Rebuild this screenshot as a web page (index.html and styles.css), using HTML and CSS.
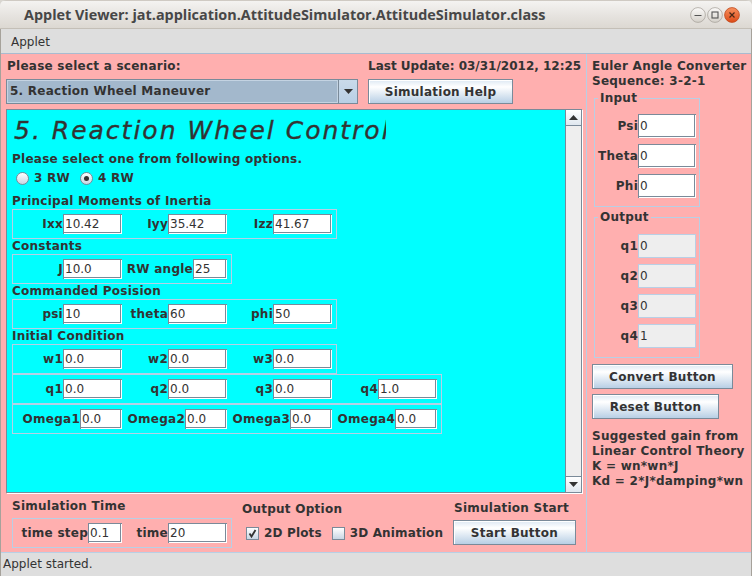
FILE: index.html
```html
<!DOCTYPE html>
<html>
<head>
<meta charset="utf-8">
<link rel="stylesheet" href="styles.css">
</head>
<body>
<div class="win">
  <div class="titlebar">
    <div class="title">Applet Viewer: jat.application.AttitudeSimulator.AttitudeSimulator.class</div>
    <div class="wbtns">
      <svg class="wb" width="16" height="16" viewBox="0 0 16 16">
        <defs>
          <linearGradient id="gl" x1="0" y1="0" x2="0" y2="1"><stop offset="0" stop-color="#fbfaf9"/><stop offset="1" stop-color="#d4d0c9"/></linearGradient>
          <linearGradient id="go" x1="0" y1="0" x2="0" y2="1"><stop offset="0" stop-color="#f8915f"/><stop offset="1" stop-color="#dc4a17"/></linearGradient>
        </defs>
        <circle cx="8" cy="8" r="7.4" fill="url(#gl)" stroke="#aaa59d" stroke-width="0.8"/>
        <path d="M4.5 8.5h7" stroke="#555" stroke-width="1.2"/>
      </svg>
      <svg class="wb" width="16" height="16" viewBox="0 0 16 16">
        <circle cx="8" cy="8" r="7.4" fill="url(#gl)" stroke="#aaa59d" stroke-width="0.8"/>
        <rect x="5" y="5" width="6" height="6" fill="none" stroke="#555" stroke-width="1.1"/>
      </svg>
      <svg class="wb" width="16" height="16" viewBox="0 0 16 16">
        <circle cx="8" cy="8" r="7.4" fill="url(#go)" stroke="#c04a1e" stroke-width="0.8"/>
        <path d="M5.5 5.5l5 5M10.5 5.5l-5 5" stroke="#4a2716" stroke-width="1.2"/>
      </svg>
    </div>
  </div>
  <div class="body">
    <div class="menubar">Applet</div>
    <div class="content">
      <div class="left">
        <div class="top">
          <div class="scen">
            <div class="line ind1">Please select a scenario:</div>
            <div class="combo">
              <span class="ctext">5. Reaction Wheel Maneuver</span>
              <span class="carrow"><svg width="9" height="5" viewBox="0 0 9 5"><path d="M0 0h9L4.5 5z" fill="#333"/></svg></span>
            </div>
          </div>
          <div class="upd">
            <div class="line tight">Last Update: 03/31/2012, 12:25</div>
            <button class="btn help">Simulation Help</button>
          </div>
        </div>
        <div class="sp">
          <div class="vp">
            <div class="bigt">5. Reaction Wheel Control</div>
            <div class="line">Please select one from following options.</div>
            <div class="radios">
              <span class="ritem"><span class="radio"></span>3 RW</span>
              <span class="ritem"><span class="radio on"></span>4 RW</span>
            </div>
            <div class="line">Principal Moments of Inertia</div>
            <div class="box">
              <div class="pair"><label>Ixx</label><span class="fld">10.42</span></div>
              <div class="pair"><label>Iyy</label><span class="fld">35.42</span></div>
              <div class="pair"><label>Izz</label><span class="fld">41.67</span></div>
            </div>
            <div class="line">Constants</div>
            <div class="box">
              <div class="pair"><label>J</label><span class="fld">10.0</span></div>
              <div class="pair"><label>RW angle</label><span class="fld w34">25</span></div>
            </div>
            <div class="line">Commanded Posision</div>
            <div class="box">
              <div class="pair"><label>psi</label><span class="fld">10</span></div>
              <div class="pair"><label>theta</label><span class="fld">60</span></div>
              <div class="pair"><label>phi</label><span class="fld">50</span></div>
            </div>
            <div class="line">Initial Condition</div>
            <div class="box">
              <div class="pair"><label>w1</label><span class="fld">0.0</span></div>
              <div class="pair"><label>w2</label><span class="fld">0.0</span></div>
              <div class="pair"><label>w3</label><span class="fld">0.0</span></div>
            </div>
            <div class="box">
              <div class="pair"><label>q1</label><span class="fld">0.0</span></div>
              <div class="pair"><label>q2</label><span class="fld">0.0</span></div>
              <div class="pair"><label>q3</label><span class="fld">0.0</span></div>
              <div class="pair"><label>q4</label><span class="fld">1.0</span></div>
            </div>
            <div class="box">
              <div class="pair"><label>Omega1</label><span class="fld w42">0.0</span></div>
              <div class="pair"><label>Omega2</label><span class="fld w42">0.0</span></div>
              <div class="pair"><label>Omega3</label><span class="fld w42">0.0</span></div>
              <div class="pair"><label>Omega4</label><span class="fld w42">0.0</span></div>
            </div>
          </div>
          <div class="vsb">
            <span class="sbtn up"><svg width="9" height="5" viewBox="0 0 9 5"><path d="M0 5h9L4.5 0z" fill="#333"/></svg></span>
            <span class="sbtn dn"><svg width="9" height="5" viewBox="0 0 9 5"><path d="M0 0h9L4.5 5z" fill="#333"/></svg></span>
          </div>
        </div>
        <div class="bottom">
          <div class="g1">
            <div class="line">Simulation Time</div>
            <div class="box">
              <div class="pair"><label>time step</label><span class="fld w34">0.1</span></div>
              <div class="pair"><label>time</label><span class="fld">20</span></div>
            </div>
          </div>
          <div class="g2">
            <div class="line">Output Option</div>
            <div class="cbrow">
              <span class="cb"><svg width="11" height="11" viewBox="0 0 11 11"><path d="M2.5 5.5L4.5 8.5L8.5 2" fill="none" stroke="#333" stroke-width="1.8"/></svg></span>
              <span class="cbl">2D Plots</span>
              <span class="cb"></span>
              <span class="cbl last">3D Animation</span>
            </div>
          </div>
          <div class="g3">
            <div class="line ind1">Simulation Start</div>
            <button class="btn start">Start Button</button>
          </div>
        </div>
      </div>
      <div class="right">
        <div class="line">Euler Angle Converter</div>
        <div class="line">Sequence: 3-2-1</div>
        <fieldset class="fs fin">
          <legend>Input</legend>
          <div class="frow"><label>Psi</label><span class="fld tall">0</span></div>
          <div class="frow"><label>Theta</label><span class="fld tall">0</span></div>
          <div class="frow"><label>Phi</label><span class="fld tall">0</span></div>
        </fieldset>
        <fieldset class="fs fout">
          <legend>Output</legend>
          <div class="frow"><label>q1</label><span class="fld tall ro">0</span></div>
          <div class="frow"><label>q2</label><span class="fld tall ro">0</span></div>
          <div class="frow"><label>q3</label><span class="fld tall ro">0</span></div>
          <div class="frow"><label>q4</label><span class="fld tall ro">1</span></div>
        </fieldset>
        <button class="btn conv">Convert Button</button>
        <button class="btn reset">Reset Button</button>
        <div class="note">Suggested gain from<br>Linear Control Theory<br>K = wn*wn*J<br>Kd = 2*J*damping*wn</div>
      </div>
    </div>
    <div class="status">Applet started.</div>
  </div>
</div>
</body>
</html>
```
FILE: styles.css
```css
* { box-sizing: border-box; margin: 0; padding: 0; }
html, body { width: 752px; height: 576px; overflow: hidden; background: #d9d6d0; }
body { font: bold 12px/15px "DejaVu Sans", sans-serif; color: #333; letter-spacing: 0.25px; }

.win { width: 752px; height: 576px; display: flex; flex-direction: column; border-radius: 6px 6px 0 0; overflow: hidden; background: #dedede; }

.titlebar { flex: none; height: 29px; display: flex; align-items: center; padding-left: 24px; background: linear-gradient(#f4f3f1, #e6e3df 55%, #dcd8d2); border-top: 1px solid #cfcac3; border-bottom: 1px solid #c4bfb7; letter-spacing: 0; }
.title { font-family: "Open Sans", sans-serif; font-size: 14.4px; font-weight: 700; color: #474747; white-space: nowrap; }
.wbtns { margin-left: auto; display: flex; gap: 1px; padding-right: 12px; }
.wb { display: block; }

.body { flex: 1; display: flex; flex-direction: column; min-height: 0; border-left: 1px solid #a6a29b; border-right: 1px solid #a6a29b; }
.menubar { flex: none; height: 25px; background: #dedede; border-bottom: 1px solid #a9bbd0; padding: 1px 0 0 10px; font-weight: normal; line-height: 24px; letter-spacing: 0; }
.content { flex: none; height: 498px; display: flex; background: #ffafaf; }
.status { flex: 1; border-top: 1px solid #b8cfe5; background: #dedede; font-weight: normal; line-height: 23px; padding-left: 2px; letter-spacing: 0; }

.line { height: 15px; line-height: 15px; white-space: nowrap; }
.ind1 { padding-left: 1px; }
.tight { letter-spacing: 0; }

.left { width: 585px; flex: none; display: flex; flex-direction: column; }
.right { flex: 1; border-left: 1px solid #b8cfe5; padding: 5px 0 0 5px; }

.top { flex: none; height: 55px; display: flex; padding: 5px 0 0 5px; }
.scen { width: 352px; }
.combo { margin-top: 5px; height: 25px; display: flex; border: 1px solid #7a8a99; background: #a3b8cc; }
.ctext { flex: 1; line-height: 23px; padding-left: 3px; box-shadow: inset 0 0 0 1px #c4d3e2; border-right: 1px solid #7a8a99; }
.carrow { width: 18px; display: flex; align-items: center; justify-content: center; background: linear-gradient(#c9daea, #b8cfe5); }
.upd { margin-left: 10px; }

.btn { display: block; height: 25px; border: 1px solid #7a8a99; background: linear-gradient(#dde8f3, #ffffff 30%, #b8cfe5); box-shadow: inset 1px 1px 0 #fff; font: bold 12px "DejaVu Sans", sans-serif; letter-spacing: 0.25px; color: #333; }
.help { width: 145px; margin-top: 5px; }

.sp { flex: none; margin-left: 5px; width: 576px; height: 384px; display: flex; border: 1px solid #7a8a99; box-shadow: 1px 1px 0 #fff; }
.vp { width: 558px; background: #00ffff; padding-left: 5px; overflow: hidden; }
.vsb { flex: 1; display: flex; flex-direction: column; justify-content: space-between; background: #eeeeee; border-left: 1px solid #7a8a99; }
.sbtn { height: 16px; display: flex; align-items: center; justify-content: center; background: linear-gradient(#ffffff, #dfe7ef); }
.sbtn.up { border-bottom: 1px solid #7a8a99; }
.sbtn.dn { border-top: 1px solid #7a8a99; }

.bigt { height: 42px; width: 374px; overflow: hidden; white-space: nowrap; font: italic normal 25px/33px "DejaVu Sans", sans-serif; letter-spacing: 2px; -webkit-text-stroke: 0.35px #333; padding: 4px 0 0 2px; color: #333; }

.radios { height: 23px; display: flex; align-items: center; padding-left: 4px; margin-bottom: 4px; }
.ritem { display: flex; align-items: center; gap: 5px; margin-right: 10px; }
.radio { width: 13px; height: 13px; border-radius: 50%; border: 1px solid #7a8a99; background: linear-gradient(#ffffff, #c8d6e4); display: flex; align-items: center; justify-content: center; }
.radio.on::after { content: ""; width: 5px; height: 5px; border-radius: 50%; background: #333; }

.box { display: flex; width: fit-content; border: 1px solid #b8cfe5; padding: 4px; }
.pair { width: 105px; display: flex; justify-content: flex-end; align-items: center; }
.fld { display: block; width: 59px; height: 20px; background: #fff; box-shadow: inset 1px 1px 0 #7a8a99, inset -1px -1px 0 #fff, inset -2px -2px 0 #7a8a99; font-weight: normal; line-height: 20px; padding-left: 2px; color: #333; letter-spacing: 0; }
.w34 { width: 34px; }
.w42 { width: 42px; }

.bottom { flex: 1; display: flex; align-items: flex-start; }
.g1 { margin: 6px 0 0 11px; }
.g1 .box { margin-top: 4px; }
.g2 { margin: 9px 0 0 10px; width: 211px; flex: none; }
.cbrow { display: flex; align-items: center; height: 21px; margin-top: 6px; padding-left: 4px; white-space: nowrap; }
.cb { flex: none; width: 13px; height: 13px; border: 1px solid #7a8a99; background: linear-gradient(#ffffff, #c8d6e4); display: flex; align-items: center; justify-content: center; }
.cbl { flex: none; margin: 0 10px 0 5px; letter-spacing: 0.15px; }
.cbl.last { margin-right: 0; }
.g3 { margin-top: 8px; flex: none; }
.start { width: 123px; margin-top: 4px; }

.fs { width: 106px; border: 1px solid #b8cfe5; margin: 2px 0 0 2px; padding: 8px 0; }
.fs legend { margin-left: 3px; padding: 0 2px; line-height: 15px; }
.fout { margin-top: 3px; padding: 9px 0; }
.frow { display: grid; grid-template-columns: 43px 58px; height: 24px; align-items: center; }
.frow + .frow { margin-top: 6px; }
.frow label { text-align: right; }
.tall { width: 58px; height: 24px; line-height: 24px; }
.ro { background: #eeeeee; box-shadow: inset 0 0 0 1px #b8cfe5; }

.conv { width: 141px; margin-top: 6px; }
.reset { width: 127px; margin-top: 5px; }
.note { margin-top: 10px; line-height: 15px; white-space: nowrap; }
```
